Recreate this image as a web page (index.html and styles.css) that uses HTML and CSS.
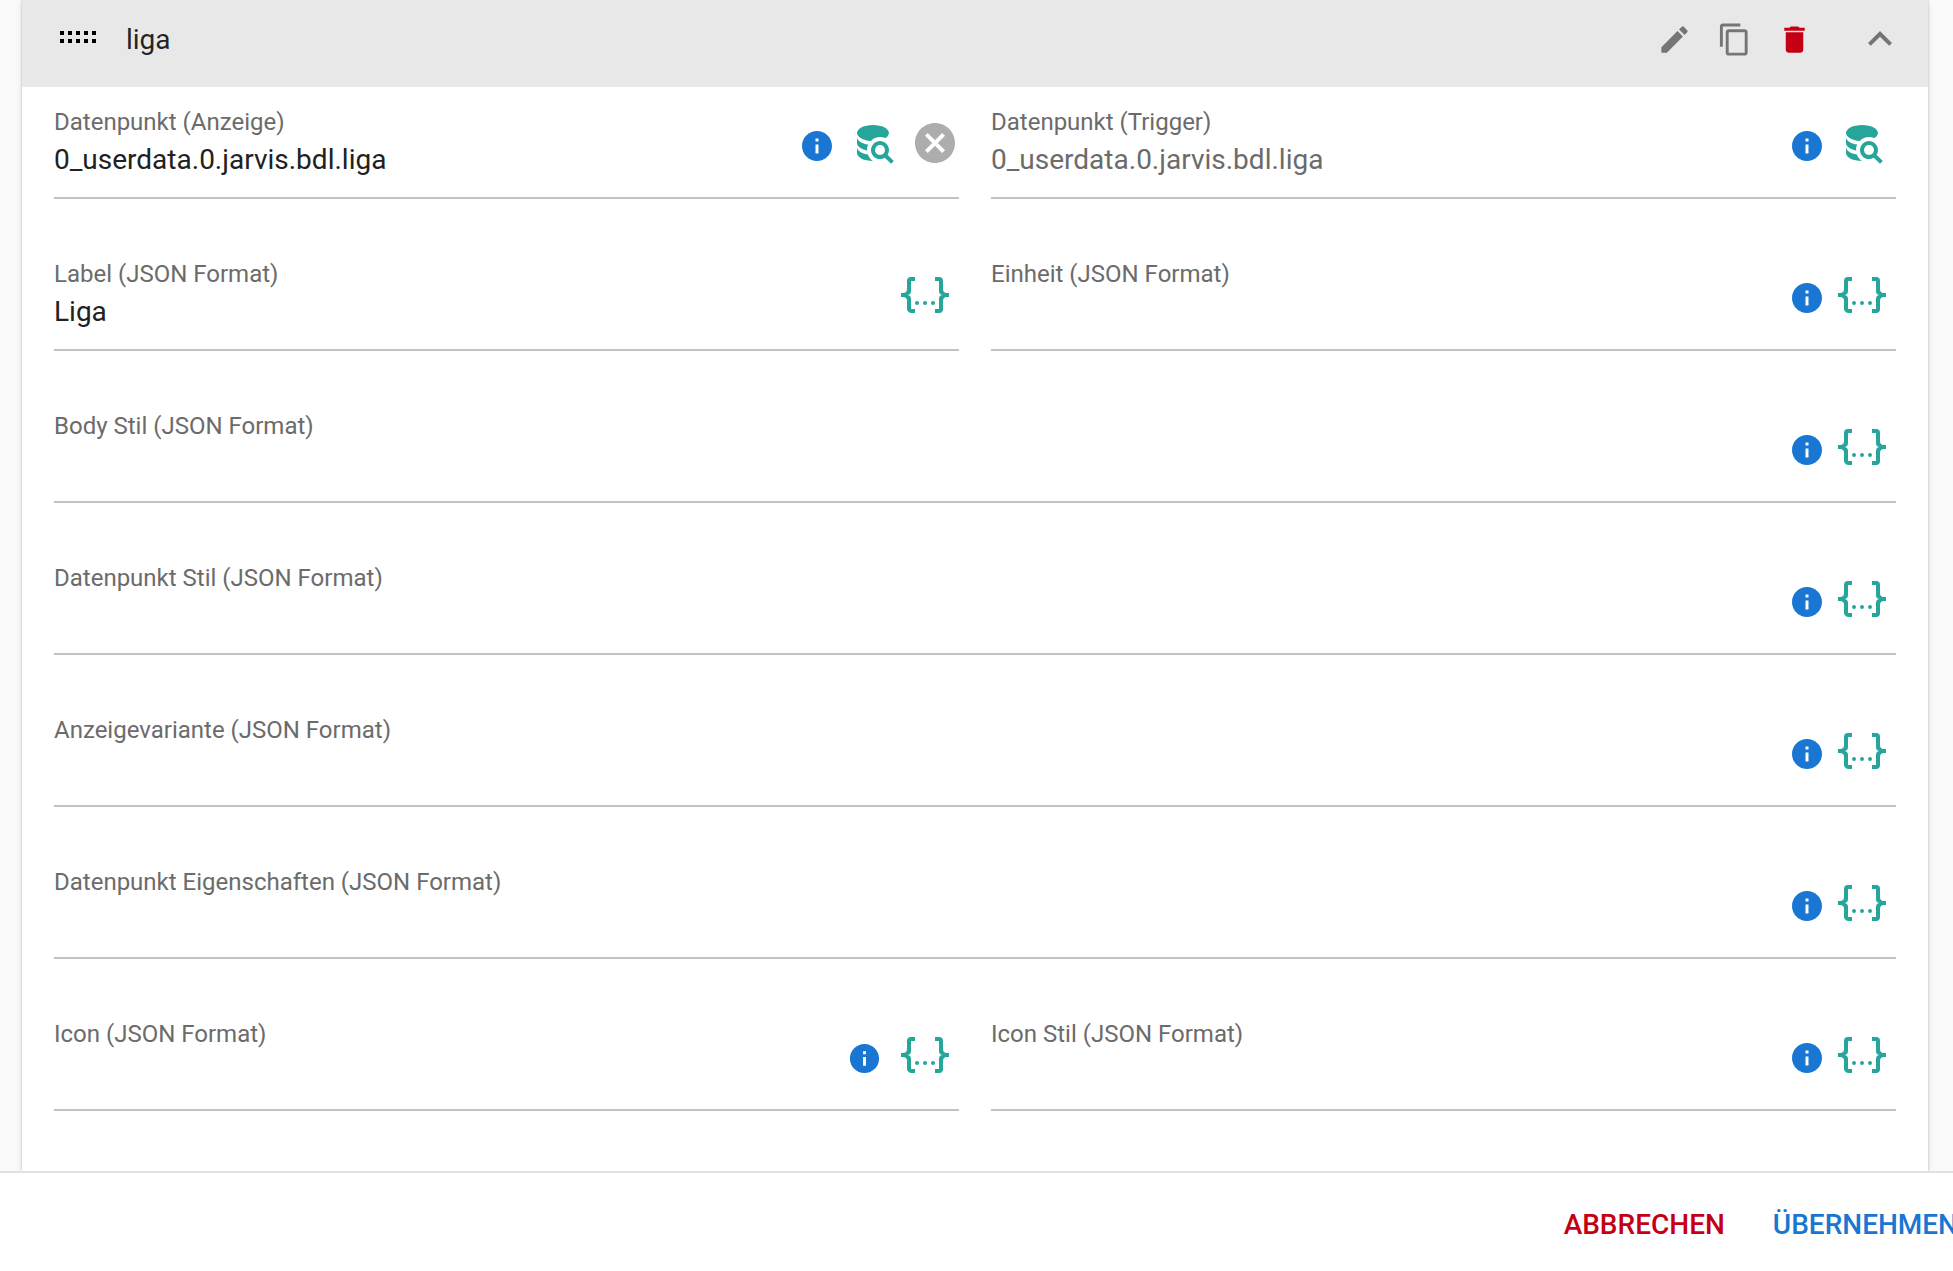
FILE: index.html
```html
<!DOCTYPE html>
<html lang="de">
<head>
<meta charset="utf-8">
<meta name="viewport" content="width=device-width, initial-scale=1">
<title>liga</title>
<link rel="stylesheet" href="styles.css">
</head>
<body>
<svg class="sprite" aria-hidden="true">
  <symbol id="info" viewBox="0 0 24 24"><path d="M12 2C6.48 2 2 6.48 2 12s4.480 10 10 10 10-4.480 10-10S17.520 2 12 2zm1 15h-2v-6h2v6zm0-8h-2V7h2v2z"/></symbol>
  <symbol id="search" viewBox="0 0 24 24"><path d="M18.680,12.320C16.920,10.560 14.070,10.570 12.320,12.330C10.560,14.090 10.560,16.940 12.320,18.690C13.810,20.170 16.110,20.430 17.890,19.320L21,22.390L22.390,21L19.300,17.890C20.430,16.120 20.170,13.800 18.680,12.320M17.270,17.270C16.290,18.250 14.710,18.240 13.730,17.270C12.760,16.290 12.760,14.710 13.740,13.730C14.710,12.760 16.290,12.760 17.270,13.730C18.240,14.710 18.240,16.290 17.270,17.270M10.900,20.100C10.250,19.440 9.740,18.650 9.420,17.780C6.270,17.250 4,15.760 4,14V17C4,19.210 7.580,21 12,21C11.600,20.740 11.230,20.440 10.900,20.100M4,9V12C4,13.680 6.070,15.120 9,15.700V15.500C9,14.570 9.200,13.650 9.580,12.810C6.340,12.300 4,10.790 4,9M12,3C7.580,3 4,4.790 4,7C4,9 7,10.680 10.850,11H10.900C12.100,9.740 13.760,9 15.500,9C16.410,9 17.310,9.190 18.140,9.560C19.170,9.090 19.870,8.120 20,7C20,4.790 16.420,3 12,3Z"/></symbol>
  <symbol id="json" viewBox="0 0 24 24"><path d="M5,3H7V5H5V10A2,2 0 0,1 3,12A2,2 0 0,1 5,14V19H7V21H5C3.930,20.730 3,20.100 3,19V15A2,2 0 0,0 1,13H0V11H1A2,2 0 0,0 3,9V5A2,2 0 0,1 5,3M19,3A2,2 0 0,1 21,5V9A2,2 0 0,0 23,11H24V13H23A2,2 0 0,0 21,15V19A2,2 0 0,1 19,21H17V19H19V14A2,2 0 0,1 21,12A2,2 0 0,1 19,10V5H17V3H19M12,15A1,1 0 0,1 13,16A1,1 0 0,1 12,17A1,1 0 0,1 11,16A1,1 0 0,1 12,15M8,15A1,1 0 0,1 9,16A1,1 0 0,1 8,17A1,1 0 0,1 7,16A1,1 0 0,1 8,15M16,15A1,1 0 0,1 17,16A1,1 0 0,1 16,17A1,1 0 0,1 15,16A1,1 0 0,1 16,15Z"/></symbol>
</svg>

<main class="content">
  <section class="panel">
    <header class="panel-header">
      <svg class="handle" viewBox="0 0 36 12" aria-hidden="true"><path d="M0 0h4v4H0zM8 0h4v4H8zM16 0h4v4h-4zM24 0h4v4h-4zM32 0h4v4h-4zM0 8h4v4H0zM8 8h4v4H8zM16 8h4v4h-4zM24 8h4v4h-4zM32 8h4v4h-4z"/></svg>
      <h2 class="panel-title">liga</h2>
      <button class="tool" type="button" aria-label="Bearbeiten"><svg viewBox="0 0 24 24"><path d="M3 17.250V21h3.750L17.810 9.940l-3.750-3.750L3 17.250zM20.710 7.040c.39-.39.39-1.020 0-1.410l-2.340-2.340a.996.996 0 0 0-1.410 0l-1.830 1.830 3.750 3.750 1.830-1.830z"/></svg></button>
      <button class="tool" type="button" aria-label="Kopieren"><svg viewBox="0 0 24 24"><path d="M16 1H4c-1.100 0-2 .9-2 2v14h2V3h12V1zm3 4H8c-1.100 0-2 .9-2 2v14c0 1.100.9 2 2 2h11c1.100 0 2-.9 2-2V7c0-1.100-.9-2-2-2zm0 16H8V7h11v14z"/></svg></button>
      <button class="tool tool-delete" type="button" aria-label="Löschen"><svg viewBox="0 0 24 24"><path d="M6 19c0 1.100.9 2 2 2h8c1.100 0 2-.9 2-2V7H6v12zM19 4h-3.500l-1-1h-5l-1 1H5v2h14V4z"/></svg></button>
      <button class="collapse" type="button" aria-label="Einklappen"><svg viewBox="0 0 24 24"><path d="M12 8l-6 6 1.410 1.410L12 10.830l4.590 4.580L18 14z"/></svg></button>
    </header>

    <form class="fields" id="datapoint">
      <div class="field">
        <div class="entry"><label for="display">Datenpunkt (Anzeige)</label><input id="display" type="text" value="0_userdata.0.jarvis.bdl.liga"></div>
        <div class="icons icons-flush">
          <button class="info" type="button" aria-label="Info"><svg><use href="#info"/></svg></button>
          <button class="action" type="button" aria-label="Datenpunkt suchen"><svg><use href="#search"/></svg></button>
          <button class="action clear" type="button" aria-label="Leeren"><svg viewBox="0 0 24 24"><path d="M12 2C6.470 2 2 6.470 2 12s4.470 10 10 10 10-4.470 10-10S17.530 2 12 2zm5 13.590L15.590 17 12 13.410 8.410 17 7 15.590 10.590 12 7 8.410 8.410 7 12 10.590 15.590 7 17 8.410 13.410 12 17 15.590z"/></svg></button>
        </div>
      </div>
      <div class="field">
        <div class="entry"><label for="trigger">Datenpunkt (Trigger)</label><input id="trigger" type="text" placeholder="0_userdata.0.jarvis.bdl.liga"></div>
        <div class="icons">
          <button class="info" type="button" aria-label="Info"><svg><use href="#info"/></svg></button>
          <button class="action" type="button" aria-label="Datenpunkt suchen"><svg><use href="#search"/></svg></button>
        </div>
      </div>
      <div class="field">
        <div class="entry"><label for="label">Label (JSON Format)</label><input id="label" type="text" value="Liga"></div>
        <div class="icons">
          <button class="action" type="button" aria-label="JSON bearbeiten"><svg><use href="#json"/></svg></button>
        </div>
      </div>
      <div class="field">
        <div class="entry"><label for="unit">Einheit (JSON Format)</label><input id="unit" type="text"></div>
        <div class="icons">
          <button class="info" type="button" aria-label="Info"><svg><use href="#info"/></svg></button>
          <button class="action" type="button" aria-label="JSON bearbeiten"><svg><use href="#json"/></svg></button>
        </div>
      </div>
      <div class="field field-wide">
        <div class="entry"><label for="body-style">Body Stil (JSON Format)</label><input id="body-style" type="text"></div>
        <div class="icons">
          <button class="info" type="button" aria-label="Info"><svg><use href="#info"/></svg></button>
          <button class="action" type="button" aria-label="JSON bearbeiten"><svg><use href="#json"/></svg></button>
        </div>
      </div>
      <div class="field field-wide">
        <div class="entry"><label for="point-style">Datenpunkt Stil (JSON Format)</label><input id="point-style" type="text"></div>
        <div class="icons">
          <button class="info" type="button" aria-label="Info"><svg><use href="#info"/></svg></button>
          <button class="action" type="button" aria-label="JSON bearbeiten"><svg><use href="#json"/></svg></button>
        </div>
      </div>
      <div class="field field-wide">
        <div class="entry"><label for="variant">Anzeigevariante (JSON Format)</label><input id="variant" type="text"></div>
        <div class="icons">
          <button class="info" type="button" aria-label="Info"><svg><use href="#info"/></svg></button>
          <button class="action" type="button" aria-label="JSON bearbeiten"><svg><use href="#json"/></svg></button>
        </div>
      </div>
      <div class="field field-wide">
        <div class="entry"><label for="properties">Datenpunkt Eigenschaften (JSON Format)</label><input id="properties" type="text"></div>
        <div class="icons">
          <button class="info" type="button" aria-label="Info"><svg><use href="#info"/></svg></button>
          <button class="action" type="button" aria-label="JSON bearbeiten"><svg><use href="#json"/></svg></button>
        </div>
      </div>
      <div class="field">
        <div class="entry"><label for="icon">Icon (JSON Format)</label><input id="icon" type="text"></div>
        <div class="icons icons-spaced">
          <button class="info" type="button" aria-label="Info"><svg><use href="#info"/></svg></button>
          <button class="action" type="button" aria-label="JSON bearbeiten"><svg><use href="#json"/></svg></button>
        </div>
      </div>
      <div class="field">
        <div class="entry"><label for="icon-style">Icon Stil (JSON Format)</label><input id="icon-style" type="text"></div>
        <div class="icons">
          <button class="info" type="button" aria-label="Info"><svg><use href="#info"/></svg></button>
          <button class="action" type="button" aria-label="JSON bearbeiten"><svg><use href="#json"/></svg></button>
        </div>
      </div>
    </form>
  </section>
</main>

<footer class="footer">
  <div class="footer-actions">
    <button class="text-button cancel" type="button">ABBRECHEN</button>
    <button class="text-button apply" type="submit" form="datapoint">ÜBERNEHMEN</button>
  </div>
</footer>
</body>
</html>
```
FILE: styles.css
```css
* {
  box-sizing: border-box;
}

body {
  margin: 0;
  min-height: 100vh;
  display: flex;
  flex-direction: column;
  background: #fafafa;
  color: rgba(0, 0, 0, 0.87);
  font-family: Roboto, "Liberation Sans", sans-serif;
  font-size: 28px;
  overflow-x: hidden;
}

button {
  margin: 0;
  padding: 0;
  border: 0;
  background: none;
  color: inherit;
  font: inherit;
  cursor: pointer;
}

svg {
  display: block;
  fill: currentColor;
}

.sprite {
  display: none;
}

.content {
  flex: 1;
  display: flex;
  flex-direction: column;
  padding: 0 25px 0 22px;
  overflow: hidden;
}

/* The spread shadow continues the side edges up to the top of the view. */
.panel {
  flex: 1;
  background: #fff;
  box-shadow: 0 0 2px rgba(0, 0, 0, 0.24), 0 2px 6px rgba(0, 0, 0, 0.12);
}

.panel-header {
  display: flex;
  align-items: center;
  padding: 0 24px 9px 38px;
  background: #e8e8e8;
}

.handle {
  width: 36px;
  height: 12px;
  margin: 0 30px 4px 0;
  fill: #000;
}

.panel-title {
  flex: 1;
  margin: 0;
  padding-top: 2px;
  font-size: 28px;
  font-weight: 400;
  line-height: 76px;
}

.tool {
  display: flex;
  justify-content: center;
  width: 60px;
  color: #757575;
}

.tool svg {
  width: 35px;
  height: 35px;
}

.tool-delete {
  color: #c50014;
}

.collapse {
  margin-left: 32px;
  color: #757575;
}

.collapse svg {
  width: 48px;
  height: 48px;
}

.fields {
  display: grid;
  grid-template-columns: 1fr 1fr;
  gap: 59px 32px;
  padding: 19px 32px 60px;
}

.field {
  display: flex;
  padding-bottom: 17px;
  border-bottom: 2px solid #c2c2c2;
}

.field-wide {
  grid-column: 1 / -1;
}

.entry {
  flex: 1;
  display: flex;
  flex-direction: column;
}

.entry label {
  color: #6b6b6b;
  font-size: 24px;
  line-height: 32px;
}

.entry input {
  width: 100%;
  height: 42px;
  padding: 0;
  border: 0;
  outline: 0;
  background: none;
  color: #212121;
  font: inherit;
}

.entry input::placeholder {
  color: #6b6b6b;
  opacity: 1;
}

.icons {
  display: flex;
  align-items: center;
  gap: 13px;
  height: 74px;
  padding-right: 10px;
}

.icons-flush {
  gap: 14px;
  padding-right: 0;
}

.icons-spaced {
  gap: 19px;
}

.info {
  padding-top: 6px;
  color: #1976d2;
}

.info svg {
  width: 36px;
  height: 36px;
}

.icons-spaced .info svg {
  width: 35px;
  height: 35px;
}

.action {
  color: #26a69a;
}

.action svg {
  width: 48px;
  height: 48px;
}

.clear {
  color: #adadad;
}

.footer {
  display: flex;
  justify-content: flex-end;
  min-height: 100px;
  border-top: 2px solid #e0e0e0;
  background: #fff;
  overflow: hidden;
}

/* The action row runs slightly past the right edge of the view. */
.footer-actions {
  display: flex;
  align-items: center;
  gap: 48px;
  margin-right: -5px;
  padding-top: 5px;
}

.text-button {
  font-weight: 500;
  line-height: 48px;
}

.cancel {
  color: #c50014;
}

.apply {
  color: #1976d2;
}
```
